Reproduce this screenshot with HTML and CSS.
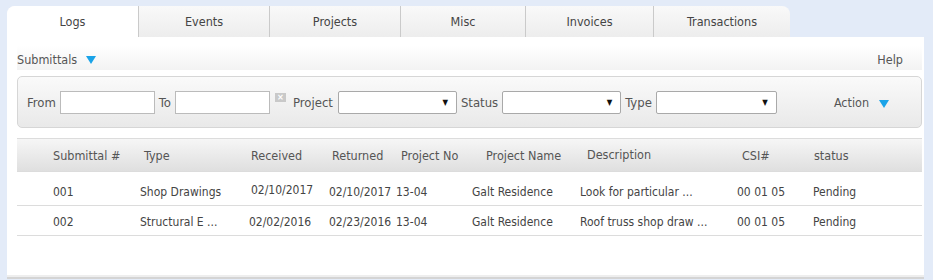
FILE: index.html
```html
<!DOCTYPE html>
<html lang="en">
<head>
    <meta charset="UTF-8">
    <title>Submittals</title>
    <link rel="stylesheet" href="styles.css">
</head>
<body>
    <div class="page">
        <ul class="tabs">
            <li class="tab active">Logs</li>
            <li class="tab">Events</li>
            <li class="tab">Projects</li>
            <li class="tab">Misc</li>
            <li class="tab">Invoices</li>
            <li class="tab last">Transactions</li>
        </ul>
        <div class="panel">
            <div class="section-bar">
                <span class="section-title">Submittals <span class="arrow"></span></span>
                <span class="help">Help</span>
            </div>

            <div class="filters">
                <label>From</label>
                <input type="text" class="date-input">
                <label>To</label>
                <input type="text" class="date-input">
                <span class="clear-btn">&times;</span>
                <label class="project-label">Project</label>
                <div class="fake-select"><span class="caret">&#9660;</span></div>
                <label>Status</label>
                <div class="fake-select"><span class="caret">&#9660;</span></div>
                <label>Type</label>
                <div class="fake-select type-select"><span class="caret">&#9660;</span></div>
                <span class="action">Action <span class="arrow"></span></span>
            </div>

            <div class="grid">
                <div class="grid-head">
                    <span>Submittal #</span>
                    <span>Type</span>
                    <span>Received</span>
                    <span>Returned</span>
                    <span>Project No</span>
                    <span>Project Name</span>
                    <span class="desc-head">Description</span>
                    <span>CSI#</span>
                    <span>status</span>
                </div>
                <div class="grid-row first">
                    <span>001</span>
                    <span>Shop Drawings</span>
                    <span class="recv-1">02/10/2017</span>
                    <span>02/10/2017</span>
                    <span>13-04</span>
                    <span>Galt Residence</span>
                    <span>Look for particular ...</span>
                    <span>00 01 05</span>
                    <span>Pending</span>
                </div>
                <div class="grid-row">
                    <span>002</span>
                    <span>Structural E ...</span>
                    <span>02/02/2016</span>
                    <span>02/23/2016</span>
                    <span>13-04</span>
                    <span>Galt Residence</span>
                    <span>Roof truss shop draw ...</span>
                    <span>00 01 05</span>
                    <span>Pending</span>
                </div>
            </div>
        </div>
    </div>
</body>
</html>
```

FILE: styles.css
```css
body {
    margin: 0;
    background-color: #fff;
    font-family: "DejaVu Sans", Verdana, sans-serif;
    font-stretch: condensed;
    color: #555;
}
.page {
    width: 917px;
    height: 280px;
    padding: 6px 9px 0 7px;
    box-sizing: content-box;
    background-color: #e3ebf8;
}
.tabs {
    list-style: none;
    margin: 0;
    padding: 0;
    display: flex;
    width: 783px;
    height: 31px;
    background: linear-gradient(#f9f9f9, #ededed);
    border-radius: 8px 8px 0 0;
    overflow: hidden;
}
.tab {
    width: 130px;
    border-left: 1px solid #cacaca;
    text-align: center;
    font-size: 12.5px;
    line-height: 31px;
    color: #444;
}
.tab.active { width: 131px; }
.tab:nth-child(4) { width: 124px; }
.tab:nth-child(5) { width: 127px; }
.tab.last { flex: 1; }
.tab.active {
    background: #fff;
    border-left: none;
}
.panel {
    background: #fff;
    height: 242px;
    padding: 8px 2px 0 10px;
    box-sizing: border-box;
    border-bottom: 2px solid #d4d4d4;
    box-shadow: inset 0 -2px 0 #eeeeee;
}
.section-bar {
    display: flex;
    justify-content: space-between;
    align-items: center;
    height: 25px;
    box-sizing: border-box;
    padding: 3px 19px 0 0;
    background: linear-gradient(#fff, #f3f3f3);
    font-size: 12.5px;
    color: #555;
}
.arrow {
    display: inline-block;
    width: 0;
    height: 0;
    margin-left: 5px;
    border-left: 5px solid transparent;
    border-right: 5px solid transparent;
    border-top: 8px solid #1aa3e8;
    vertical-align: middle;
}
.filters {
    margin-top: 6px;
    height: 52px;
    box-sizing: border-box;
    border: 1px solid #d6d6d6;
    border-radius: 5px;
    background: linear-gradient(#fafafa, #e9e9e9);
    display: flex;
    align-items: center;
    padding: 0 0 0 9px;
    font-size: 13px;
}
.filters label {
    margin-right: 4px;
}
.filters .project-label {
    margin-left: 1px;
    margin-right: 5px;
}
.date-input {
    width: 95px;
    height: 23px;
    box-sizing: border-box;
    border: 1px solid #bbb;
    background: #fff;
    margin: 0 4px 0 0;
    padding: 0;
}
.clear-btn {
    display: inline-block;
    width: 11px;
    height: 9px;
    line-height: 8px;
    background: #c9c9c9;
    color: #fff;
    font-size: 9px;
    text-align: center;
    margin: 0 6px 10px 1px;
    font-weight: bold;
}
.fake-select {
    width: 119px;
    height: 23px;
    box-sizing: border-box;
    border: 1px solid #a9a9a9;
    border-radius: 2px;
    background: #fff;
    display: flex;
    justify-content: flex-end;
    align-items: center;
    margin-right: 4px;
}
.type-select { width: 121px; }
.caret {
    font-size: 8px;
    color: #111;
    margin-right: 8px;
}
.action {
    margin-left: 53px;
    font-size: 12.5px;
    margin-top: 1px;
}
.action .arrow { margin-left: 6px; }
.grid {
    margin-top: 10px;
    font-size: 12px;
}
.grid-head,
.grid-row {
    display: grid;
    align-items: center;
    padding-left: 36px;
    border-bottom: 1px solid #dcdcdc;
}
.grid-head {
    grid-template-columns: 91px 107px 81px 69px 85px 101px 155px 72px 1fr;
    height: 34px;
    box-sizing: border-box;
    border-top: 1px solid #dcdcdc;
    background: linear-gradient(#f6f6f6, #dfdfdf);
    font-size: 12.5px;
    color: #555;
}
.desc-head { margin-top: -2px; }
.grid-row {
    grid-template-columns: 87px 109px 80px 67px 76px 108px 157px 76px 1fr;
    height: 30px;
    box-sizing: border-box;
    padding-top: 2px;
    color: #444;
}
.grid-row.first { height: 34px; padding-top: 6px; }
.recv-1 { margin-left: 2px; margin-top: -3px; }
```
